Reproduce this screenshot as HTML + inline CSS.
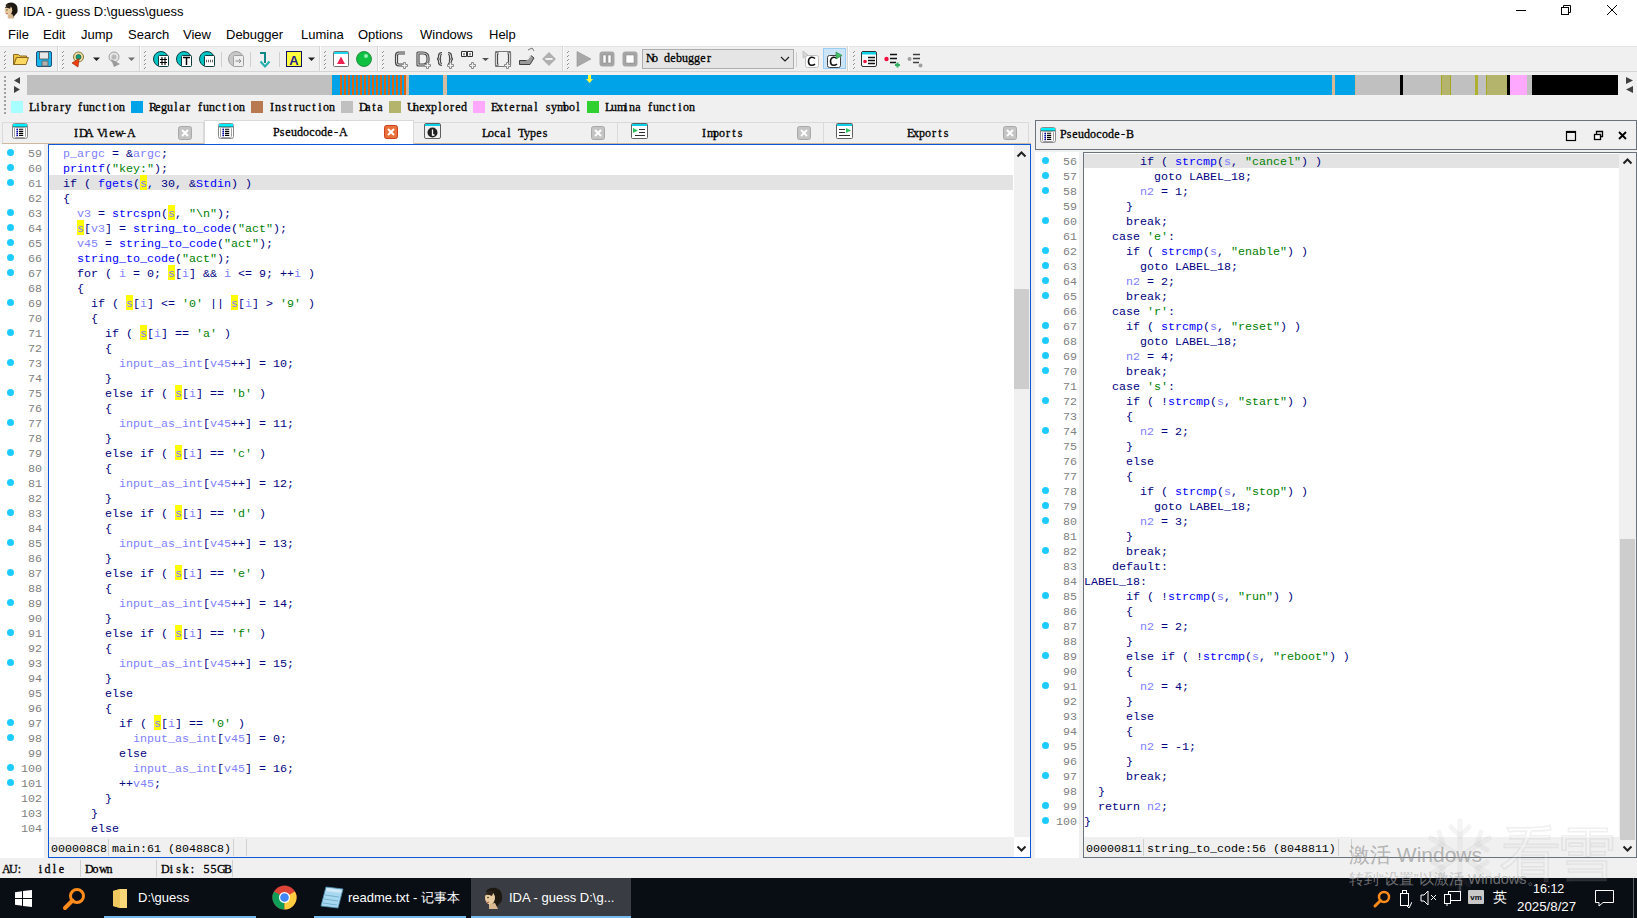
<!DOCTYPE html>
<html><head><meta charset="utf-8"><title>IDA</title><style>
*{margin:0;padding:0;box-sizing:border-box}
html,body{width:1637px;height:918px;overflow:hidden}
body{position:relative;background:#f0f0f0;font-family:"Liberation Sans",sans-serif;color:#000}
.abs,div,b,span,svg{position:absolute}
i{font-style:normal}
.titlebar{left:0;top:0;width:1637px;height:46px;background:#fff}
.title{left:23px;top:3px;font-size:13px;line-height:18px;color:#000;white-space:nowrap}
.menu{top:26px;font-size:13px;line-height:17px;white-space:nowrap}
.toolbar{left:0;top:46px;width:1637px;height:26px;background:#f0f0f0;border-top:1px solid #e3e3e3;border-bottom:1px solid #d5d5d5}
.grip{width:3px;border-left:2px dotted #a0a0a0}
.sep{width:1px;background:#d0d0d0}
.navbar{top:75px;height:20px}
.legbox{top:101px;width:12px;height:12px}
.legtxt{top:99px;font-family:"Liberation Serif",serif;font-size:12px;line-height:16px;-webkit-text-stroke:0.3px #000;white-space:nowrap}
.tab{top:122px;height:21px;background:#f0f0f0;border:1px solid #dadada;border-bottom:none}
.tabtxt{font-family:"Liberation Serif",serif;font-size:12px;-webkit-text-stroke:0.3px #000;line-height:14px;white-space:nowrap}
.code{font-family:"Liberation Mono",monospace;font-size:11.67px}
.ln{width:40px;text-align:right;font-family:"Liberation Mono",monospace;font-size:11.67px;line-height:15px;padding-top:2px;color:#808080;white-space:pre}
.cl{font-family:"Liberation Mono",monospace;font-size:11.67px;line-height:15px;padding-top:2px;color:#000080;white-space:pre}
.dot{width:7px;height:7px;border-radius:50%;background:#1ecbff}
.v{color:#8080ff}
.f{color:#0000ff}
.s{color:#008000}
.h{color:#8080ff}
.status{font-family:"Liberation Serif",serif;font-size:12px;-webkit-text-stroke:0.3px #000;line-height:14px;white-space:nowrap}
.taskbar{left:0;top:878px;width:1637px;height:40px;background:#090d14}
.tbtxt{color:#fff;font-size:13px;line-height:18px;white-space:nowrap}
u{text-decoration:none;display:inline-block;width:6px;text-align:center}
.sm{font-family:"Liberation Serif",serif;font-weight:bold;font-size:12px;white-space:nowrap}
.status u{width:7px}

</style></head><body>
<div class="titlebar"></div>
<!-- app icon -->
<svg style="left:1px;top:2px" width="18" height="18" viewBox="0 0 24 24"><path d="M6 4 Q10 0 16 1 Q22 3 22 9 Q23 14 19 17 L16 21 L12 15 Z" fill="#1e1812"/><ellipse cx="10" cy="11" rx="5" ry="6.5" fill="#e6caa0"/><path d="M5 8 Q8 3 14 4 L12 9 Q8 7 5 8 Z" fill="#2a2018"/><circle cx="8" cy="10.5" r="0.8" fill="#302010"/><path d="M6.5 15 Q8 16 9 15" stroke="#b04030" stroke-width="1" fill="none"/><path d="M9 17 L15 16 L18 22 H9 Z" fill="#d8b890"/></svg>
<div class="title">IDA - guess D:\guess\guess</div>
<svg style="left:1515px;top:5px" width="104" height="11" viewBox="0 0 104 11"><line x1="1" y1="5.5" x2="11" y2="5.5" stroke="#000" stroke-width="1"/><rect x="46.5" y="2.5" width="7" height="7" fill="none" stroke="#000"/><path d="M48.5 2.5 V0.5 H55.5 V7.5 H53.5" fill="none" stroke="#000"/><path d="M92 0 L102 10 M102 0 L92 10" stroke="#000" stroke-width="1"/></svg>
<div class="menu" style="left:8px">File</div>
<div class="menu" style="left:43px">Edit</div>
<div class="menu" style="left:81px">Jump</div>
<div class="menu" style="left:128px">Search</div>
<div class="menu" style="left:183px">View</div>
<div class="menu" style="left:226px">Debugger</div>
<div class="menu" style="left:301px">Lumina</div>
<div class="menu" style="left:358px">Options</div>
<div class="menu" style="left:420px">Windows</div>
<div class="menu" style="left:489px">Help</div>

<div class="toolbar"></div>
<svg style="left:0;top:46px" width="940" height="26" viewBox="0 0 940 26">
<defs>
<pattern id="grp" width="3" height="3" patternUnits="userSpaceOnUse"><rect x="1" y="0" width="1" height="1" fill="#8c8c8c"/><rect x="0" y="1" width="1" height="1" fill="#b5b5b5"/></pattern>
</defs>
<!-- grips --><rect x="5" y="5" width="1" height="1" fill="#9a9a9a"/><rect x="4" y="6" width="1" height="1" fill="#8a8a8a"/><rect x="5" y="7" width="1" height="1" fill="#fafafa"/><rect x="5" y="9" width="1" height="1" fill="#9a9a9a"/><rect x="4" y="10" width="1" height="1" fill="#8a8a8a"/><rect x="5" y="11" width="1" height="1" fill="#fafafa"/><rect x="5" y="13" width="1" height="1" fill="#9a9a9a"/><rect x="4" y="14" width="1" height="1" fill="#8a8a8a"/><rect x="5" y="15" width="1" height="1" fill="#fafafa"/><rect x="5" y="17" width="1" height="1" fill="#9a9a9a"/><rect x="4" y="18" width="1" height="1" fill="#8a8a8a"/><rect x="5" y="19" width="1" height="1" fill="#fafafa"/><rect x="5" y="21" width="1" height="1" fill="#9a9a9a"/><rect x="4" y="22" width="1" height="1" fill="#8a8a8a"/><rect x="5" y="23" width="1" height="1" fill="#fafafa"/><rect x="63" y="5" width="1" height="1" fill="#9a9a9a"/><rect x="62" y="6" width="1" height="1" fill="#8a8a8a"/><rect x="63" y="7" width="1" height="1" fill="#fafafa"/><rect x="63" y="9" width="1" height="1" fill="#9a9a9a"/><rect x="62" y="10" width="1" height="1" fill="#8a8a8a"/><rect x="63" y="11" width="1" height="1" fill="#fafafa"/><rect x="63" y="13" width="1" height="1" fill="#9a9a9a"/><rect x="62" y="14" width="1" height="1" fill="#8a8a8a"/><rect x="63" y="15" width="1" height="1" fill="#fafafa"/><rect x="63" y="17" width="1" height="1" fill="#9a9a9a"/><rect x="62" y="18" width="1" height="1" fill="#8a8a8a"/><rect x="63" y="19" width="1" height="1" fill="#fafafa"/><rect x="63" y="21" width="1" height="1" fill="#9a9a9a"/><rect x="62" y="22" width="1" height="1" fill="#8a8a8a"/><rect x="63" y="23" width="1" height="1" fill="#fafafa"/><rect x="145" y="5" width="1" height="1" fill="#9a9a9a"/><rect x="144" y="6" width="1" height="1" fill="#8a8a8a"/><rect x="145" y="7" width="1" height="1" fill="#fafafa"/><rect x="145" y="9" width="1" height="1" fill="#9a9a9a"/><rect x="144" y="10" width="1" height="1" fill="#8a8a8a"/><rect x="145" y="11" width="1" height="1" fill="#fafafa"/><rect x="145" y="13" width="1" height="1" fill="#9a9a9a"/><rect x="144" y="14" width="1" height="1" fill="#8a8a8a"/><rect x="145" y="15" width="1" height="1" fill="#fafafa"/><rect x="145" y="17" width="1" height="1" fill="#9a9a9a"/><rect x="144" y="18" width="1" height="1" fill="#8a8a8a"/><rect x="145" y="19" width="1" height="1" fill="#fafafa"/><rect x="145" y="21" width="1" height="1" fill="#9a9a9a"/><rect x="144" y="22" width="1" height="1" fill="#8a8a8a"/><rect x="145" y="23" width="1" height="1" fill="#fafafa"/><rect x="325" y="5" width="1" height="1" fill="#9a9a9a"/><rect x="324" y="6" width="1" height="1" fill="#8a8a8a"/><rect x="325" y="7" width="1" height="1" fill="#fafafa"/><rect x="325" y="9" width="1" height="1" fill="#9a9a9a"/><rect x="324" y="10" width="1" height="1" fill="#8a8a8a"/><rect x="325" y="11" width="1" height="1" fill="#fafafa"/><rect x="325" y="13" width="1" height="1" fill="#9a9a9a"/><rect x="324" y="14" width="1" height="1" fill="#8a8a8a"/><rect x="325" y="15" width="1" height="1" fill="#fafafa"/><rect x="325" y="17" width="1" height="1" fill="#9a9a9a"/><rect x="324" y="18" width="1" height="1" fill="#8a8a8a"/><rect x="325" y="19" width="1" height="1" fill="#fafafa"/><rect x="325" y="21" width="1" height="1" fill="#9a9a9a"/><rect x="324" y="22" width="1" height="1" fill="#8a8a8a"/><rect x="325" y="23" width="1" height="1" fill="#fafafa"/><rect x="383" y="5" width="1" height="1" fill="#9a9a9a"/><rect x="382" y="6" width="1" height="1" fill="#8a8a8a"/><rect x="383" y="7" width="1" height="1" fill="#fafafa"/><rect x="383" y="9" width="1" height="1" fill="#9a9a9a"/><rect x="382" y="10" width="1" height="1" fill="#8a8a8a"/><rect x="383" y="11" width="1" height="1" fill="#fafafa"/><rect x="383" y="13" width="1" height="1" fill="#9a9a9a"/><rect x="382" y="14" width="1" height="1" fill="#8a8a8a"/><rect x="383" y="15" width="1" height="1" fill="#fafafa"/><rect x="383" y="17" width="1" height="1" fill="#9a9a9a"/><rect x="382" y="18" width="1" height="1" fill="#8a8a8a"/><rect x="383" y="19" width="1" height="1" fill="#fafafa"/><rect x="383" y="21" width="1" height="1" fill="#9a9a9a"/><rect x="382" y="22" width="1" height="1" fill="#8a8a8a"/><rect x="383" y="23" width="1" height="1" fill="#fafafa"/><rect x="568" y="5" width="1" height="1" fill="#9a9a9a"/><rect x="567" y="6" width="1" height="1" fill="#8a8a8a"/><rect x="568" y="7" width="1" height="1" fill="#fafafa"/><rect x="568" y="9" width="1" height="1" fill="#9a9a9a"/><rect x="567" y="10" width="1" height="1" fill="#8a8a8a"/><rect x="568" y="11" width="1" height="1" fill="#fafafa"/><rect x="568" y="13" width="1" height="1" fill="#9a9a9a"/><rect x="567" y="14" width="1" height="1" fill="#8a8a8a"/><rect x="568" y="15" width="1" height="1" fill="#fafafa"/><rect x="568" y="17" width="1" height="1" fill="#9a9a9a"/><rect x="567" y="18" width="1" height="1" fill="#8a8a8a"/><rect x="568" y="19" width="1" height="1" fill="#fafafa"/><rect x="568" y="21" width="1" height="1" fill="#9a9a9a"/><rect x="567" y="22" width="1" height="1" fill="#8a8a8a"/><rect x="568" y="23" width="1" height="1" fill="#fafafa"/><rect x="854" y="5" width="1" height="1" fill="#9a9a9a"/><rect x="853" y="6" width="1" height="1" fill="#8a8a8a"/><rect x="854" y="7" width="1" height="1" fill="#fafafa"/><rect x="854" y="9" width="1" height="1" fill="#9a9a9a"/><rect x="853" y="10" width="1" height="1" fill="#8a8a8a"/><rect x="854" y="11" width="1" height="1" fill="#fafafa"/><rect x="854" y="13" width="1" height="1" fill="#9a9a9a"/><rect x="853" y="14" width="1" height="1" fill="#8a8a8a"/><rect x="854" y="15" width="1" height="1" fill="#fafafa"/><rect x="854" y="17" width="1" height="1" fill="#9a9a9a"/><rect x="853" y="18" width="1" height="1" fill="#8a8a8a"/><rect x="854" y="19" width="1" height="1" fill="#fafafa"/><rect x="854" y="21" width="1" height="1" fill="#9a9a9a"/><rect x="853" y="22" width="1" height="1" fill="#8a8a8a"/><rect x="854" y="23" width="1" height="1" fill="#fafafa"/>
<!-- full separators -->
<g fill="#d5d5d5"><rect x="57" y="0" width="1" height="25"/><rect x="139" y="0" width="1" height="25"/><rect x="319" y="0" width="1" height="25"/><rect x="377" y="0" width="1" height="25"/><rect x="562" y="0" width="1" height="25"/><rect x="847" y="0" width="1" height="25"/></g>
<g fill="#fdfdfd"><rect x="58" y="0" width="1" height="25"/><rect x="140" y="0" width="1" height="25"/><rect x="320" y="0" width="1" height="25"/><rect x="378" y="0" width="1" height="25"/><rect x="563" y="0" width="1" height="25"/><rect x="848" y="0" width="1" height="25"/></g>
<!-- short separators -->
<g fill="#cfcfcf"><rect x="221" y="6" width="1" height="15"/><rect x="250" y="6" width="1" height="15"/><rect x="279" y="6" width="1" height="15"/><rect x="796" y="6" width="1" height="15"/></g>
<!-- folder -->
<path d="M13.5 8.5 H18.5 L20 10 H26.5 V11.5 H16.5 L14 18.5 H13.5 Z" fill="#f0c040" stroke="#8a6a20"/>
<path d="M14 18.5 L16.5 11.5 H28.5 L26 18.5 Z" fill="#fbd860" stroke="#8a6a20"/>
<!-- floppy -->
<rect x="36.5" y="5.5" width="15" height="15" rx="1.5" fill="#19b6ee" stroke="#20507a"/>
<rect x="39.5" y="6" width="9" height="7" fill="#e8e8e8" stroke="#505050" stroke-width="0.8"/>
<rect x="42" y="15" width="6" height="5" fill="#b0b0b0" stroke="#606060" stroke-width="0.8"/>
<!-- icon red+green -->
<circle cx="78.5" cy="11" r="5" fill="#f0e0a0" stroke="#807040"/>
<circle cx="78.5" cy="11" r="2.5" fill="#10a080" stroke="#205040" stroke-width="0.7"/>
<path d="M72 17 L79 12.5 L78 21 Z" fill="#f04010" stroke="#902000" stroke-width="0.6"/>
<path d="M93 11.5 H100 L96.5 15 Z" fill="#202020"/>
<!-- gray hand -->
<circle cx="114" cy="11" r="5" fill="#e6e6e6" stroke="#a0a0a0"/>
<circle cx="114" cy="11" r="2.5" fill="#b8b8b8"/>
<path d="M111 13 L120 18 L114 21 Z" fill="#9a9a9a"/>
<path d="M128 11.5 H135 L131.5 15 Z" fill="#707070"/>
<!-- teal circles -->
<g>
<circle cx="161" cy="13" r="7.5" fill="#00c4c4" stroke="#0c3c3c"/>
<rect x="158.5" y="9.5" width="10" height="11" rx="1" fill="#fff" stroke="#0c3c3c"/>
<path d="M162 11 V19 M165 11 V19 M160 13.5 H167 M160 16.5 H167" stroke="#000" stroke-width="1.1"/>
<circle cx="184" cy="13" r="7.5" fill="#00c4c4" stroke="#0c3c3c"/>
<rect x="181.5" y="9.5" width="10" height="11" rx="1" fill="#fff" stroke="#0c3c3c"/>
<path d="M183 11.5 H190 M186.5 11.5 V19" stroke="#000" stroke-width="1.5"/>
<circle cx="207" cy="13" r="7.5" fill="#00c4c4" stroke="#0c3c3c"/>
<rect x="204.5" y="9.5" width="10" height="11" rx="1" fill="#fff" stroke="#0c3c3c"/>
<path d="M206 15 H213" stroke="#606060" stroke-width="2.5" stroke-dasharray="1,1"/>
</g>
<!-- gray circle -->
<circle cx="236" cy="13" r="7.5" fill="#c8c8c8" stroke="#a0a0a0"/>
<rect x="233.5" y="9.5" width="10" height="11" rx="1" fill="#eeeeee" stroke="#a0a0a0"/>
<path d="M235.5 15 H241 M239 13 L241 15 L239 17" fill="none" stroke="#8a8a8a"/>
<!-- teal arrow -->
<path d="M260 7 H265 V17" fill="none" stroke="#108888" stroke-width="2"/>
<path d="M260.5 15.5 L265 20.5 L269.5 15.5" fill="none" stroke="#20b0b0" stroke-width="2"/>
<!-- A box -->
<rect x="286.5" y="5.5" width="15" height="15" fill="#ffff40" stroke="#101060"/>
<text x="294" y="18.5" font-family="Liberation Sans" font-weight="bold" font-size="13" fill="#202090" text-anchor="middle">A</text>
<path d="M308 11.5 H315 L311.5 15 Z" fill="#202020"/>
<!-- red triangle window -->
<rect x="333.5" y="5.5" width="15" height="15" rx="1" fill="#fff" stroke="#707070"/>
<rect x="334" y="6" width="14" height="2" fill="#20d8f0"/>
<path d="M337 18 L341 10.5 L345 18 Z" fill="#f02050"/>
<!-- green sphere -->
<circle cx="364" cy="13" r="7.5" fill="#10c040" stroke="#108030" stroke-width="0.8"/>
<circle cx="366" cy="10" r="2" fill="#90f0b0"/>
<!-- C D {} grid [] pen diamond -->
<g fill="none" stroke-linejoin="round">
<g stroke="#4a4a4a" stroke-width="3.2">
<path d="M405 7 H399 Q396.5 7 396.5 9.5 V16.5 Q396.5 19 399 19 H404"/>
<path d="M418 7 H423 Q428 7 428 12 V14 Q428 19 423 19 H418 Z"/>
<path d="M442 7.5 Q439.5 7.5 439.5 10 V12 L438.5 13 L439.5 14 V16 Q439.5 18.5 442 18.5 M448 7.5 Q450.5 7.5 450.5 10 V12 L451.5 13 L450.5 14 V16 Q450.5 18.5 448 18.5"/>
<path d="M498.5 7 H496.5 V19 H498.5 M507.5 7 H509.5 V19 H507.5"/>
</g>
<g stroke="#d8d8d8" stroke-width="1">
<path d="M405 7 H399 Q396.5 7 396.5 9.5 V16.5 Q396.5 19 399 19 H404"/>
<path d="M418 7 H423 Q428 7 428 12 V14 Q428 19 423 19 H418 Z"/>
<path d="M442 7.5 Q439.5 7.5 439.5 10 V12 L438.5 13 L439.5 14 V16 Q439.5 18.5 442 18.5 M448 7.5 Q450.5 7.5 450.5 10 V12 L451.5 13 L450.5 14 V16 Q450.5 18.5 448 18.5"/>
<path d="M498.5 7 H496.5 V19 H498.5 M507.5 7 H509.5 V19 H507.5"/>
</g>
<rect x="495.5" y="5.5" width="15" height="15" stroke="#7a7a7a" stroke-width="1"/>
<rect x="461.5" y="5.5" width="5" height="5" stroke="#303030"/><rect x="467.5" y="5.5" width="5" height="5" stroke="#303030"/>
<rect x="462" y="6" width="4" height="4" fill="#fff" stroke="none"/><rect x="468" y="6" width="4" height="4" fill="#fff" stroke="none"/>
<path d="M464 7 V9.5 M470 7 V9.5" stroke="#303030"/>
</g>
<g fill="#f0f0f0" stroke="#8a8a8a" stroke-width="1"><path d="M403.5 16.5 h2 v2 h2 v2 h-2 v2 h-2 v-2 h-2 v-2 h2 Z"/><path d="M426.5 16.5 h2 v2 h2 v2 h-2 v2 h-2 v-2 h-2 v-2 h2 Z"/><path d="M449.5 16.5 h2 v2 h2 v2 h-2 v2 h-2 v-2 h-2 v-2 h2 Z"/><path d="M471.5 16.5 h2 v2 h2 v2 h-2 v2 h-2 v-2 h-2 v-2 h2 Z"/><path d="M506.5 16.5 h2 v2 h2 v2 h-2 v2 h-2 v-2 h-2 v-2 h2 Z"/></g>
<path d="M482 12 H489 L485.5 15 Z" fill="#505050"/>
<path d="M519.5 14.5 H527 L531 9.5 L534 12 L530 18.5 H519.5 Z" fill="#9a9a9a" stroke="#404040" stroke-width="1"/>
<path d="M527 14.5 L531 9.5" stroke="#fff" stroke-width="1"/>
<path d="M528 4 L532 2 L534 5" fill="none" stroke="#707070" stroke-width="1"/>
<path d="M542 13 L549 6 L556 13 L549 20 Z" fill="#b0b0b0"/>
<rect x="545.5" y="12" width="7" height="2" fill="#f0f0f0"/>
<!-- play pause stop -->
<path d="M577 5.5 L591 13 L577 20.5 Z" fill="#a8a8a8" stroke="#909090" stroke-width="0.6"/>
<rect x="599.5" y="5.5" width="15" height="15" rx="3" fill="#a6a6a6"/>
<rect x="603" y="9" width="3" height="8" fill="#fff" stroke="#808080" stroke-width="0.5"/><rect x="608" y="9" width="3" height="8" fill="#fff" stroke="#808080" stroke-width="0.5"/>
<rect x="622.5" y="5.5" width="15" height="15" rx="3" fill="#a6a6a6"/>
<rect x="626" y="9" width="8" height="8" fill="#fff" stroke="#808080" stroke-width="0.5"/>
<!-- combo -->
<rect x="642.5" y="3.5" width="151" height="19" fill="#e5e5e5" stroke="#adadad"/>
<path d="M781 11 L785 15 L789 11" fill="none" stroke="#202020" stroke-width="1.2"/>
<!-- C icons -->
<rect x="805.5" y="9.5" width="13" height="12" rx="2" fill="#fff" stroke="#c0c0c0"/>
<path d="M803 5 L808 9 L803 12 Z" fill="#d8d8d8" stroke="#b0b0b0" stroke-width="0.6"/>
<path d="M815 12.5 Q813.5 11 811.5 11.2 Q808.5 11.8 808.5 15.5 Q808.5 19 811.5 19.3 Q813.5 19.5 815 18" fill="none" stroke="#101010" stroke-width="1.6"/>
<rect x="823.5" y="2.5" width="22" height="20" fill="#cce4f7" stroke="#99ccf5"/>
<rect x="827.5" y="9.5" width="13" height="12" rx="2" fill="#fff" stroke="#404040"/>
<path d="M837 12.5 Q835.5 11 833.5 11.2 Q830.5 11.8 830.5 15.5 Q830.5 19 833.5 19.3 Q835.5 19.5 837 18" fill="none" stroke="#101010" stroke-width="1.6"/>
<path d="M836 6 L842 9.5 L836 13 Z" fill="#40c060" stroke="#208040" stroke-width="0.6"/>
<!-- list icons -->
<rect x="861.5" y="5.5" width="15" height="15" rx="1.5" fill="#fff" stroke="#303030"/>
<rect x="862" y="6" width="14" height="2.5" fill="#10d0e8"/>
<circle cx="865" cy="15.5" r="1.8" fill="#f01040"/>
<path d="M868 11.5 H875 M868 14.5 H875 M868 17.5 H875" stroke="#101010" stroke-width="1.5"/>
<circle cx="886.5" cy="13" r="2.2" fill="#f01040"/>
<path d="M890 8.5 H897 M890 12.5 H897 M890 16.5 H896" stroke="#101010" stroke-width="1.5"/>
<path d="M897.5 16.5 V21.5 M895 19 H900" stroke="#30b060" stroke-width="2"/>
<circle cx="909.5" cy="13" r="2" fill="#a0a0a0"/>
<path d="M913 8.5 H920 M913 12.5 H920 M913 16.5 H919" stroke="#404040" stroke-width="1.5"/>
<circle cx="920.5" cy="19.5" r="2" fill="#a0a0a0"/>
</svg>
<div style="left:646px;top:51px;font-family:'Liberation Serif',serif;-webkit-text-stroke:0.3px #000;font-size:12px;line-height:14px;white-space:nowrap"><u>N</u><u>o</u><u>&nbsp;</u><u>d</u><u>e</u><u>b</u><u>u</u><u>g</u><u>g</u><u>e</u><u>r</u></div>


<!-- nav band -->
<div class="grip" style="left:4px;top:76px;height:38px"></div>
<svg style="left:12px;top:76px" width="10" height="18" viewBox="0 0 10 18"><path d="M8 1 L2 4.5 L8 8 Z" fill="#404040"/><path d="M2 10 L8 13.5 L2 17 Z" fill="#404040"/></svg>
<svg style="left:27px;top:75px" width="1592" height="20" viewBox="27 0 1592 20" shape-rendering="crispEdges">
<defs>
<pattern id="stripes" x="338" y="0" width="4" height="20" patternUnits="userSpaceOnUse"><rect x="0" y="0" width="2" height="20" fill="#00a2e8"/><rect x="2" y="0" width="2" height="20" fill="#e0620a"/></pattern>
</defs>
<rect x="27" y="0" width="305" height="20" fill="#c0c0c0"/>
<rect x="331" y="0" width="1" height="20" fill="#d8b890"/>
<rect x="332" y="0" width="6" height="20" fill="#00a2e8"/>
<rect x="338" y="0" width="68" height="20" fill="url(#stripes)"/>
<rect x="406" y="0" width="3" height="20" fill="#c8b8a8"/>
<rect x="409" y="0" width="34" height="20" fill="#00a2e8"/>
<rect x="443" y="0" width="4" height="20" fill="#d4bca0"/>
<rect x="447" y="0" width="885" height="20" fill="#00a2e8"/>
<rect x="1332" y="0" width="3" height="20" fill="#d8b890"/>
<rect x="1335" y="0" width="20" height="20" fill="#00a2e8"/>
<rect x="1355" y="0" width="1" height="20" fill="#d8b890"/>
<rect x="1356" y="0" width="44" height="20" fill="#c0c0c0"/>
<rect x="1400" y="0" width="3" height="20" fill="#000"/>
<rect x="1403" y="0" width="38" height="20" fill="#c0c0c0"/>
<rect x="1441" y="0" width="10" height="20" fill="#b4b46c"/>
<rect x="1441" y="0" width="1" height="20" fill="#a8a820"/><rect x="1450" y="0" width="1" height="20" fill="#a8a820"/>
<rect x="1451" y="0" width="24" height="20" fill="#c0c0c0"/>
<rect x="1475" y="0" width="3" height="20" fill="#b0b030"/>
<rect x="1478" y="0" width="8" height="20" fill="#c0c0c0"/>
<rect x="1486" y="0" width="21" height="20" fill="#b4b46c"/>
<rect x="1486" y="0" width="1" height="20" fill="#a8a820"/>
<rect x="1507" y="0" width="3" height="20" fill="#000"/>
<rect x="1510" y="0" width="17" height="20" fill="#ffa8ff"/>
<rect x="1527" y="0" width="5" height="20" fill="#c0c0c0"/>
<rect x="1532" y="0" width="86" height="20" fill="#000"/>
</svg>
<!-- yellow arrow marker -->
<svg style="left:586px;top:75px" width="7" height="9" viewBox="0 0 7 9"><rect x="2" y="0" width="3" height="5" fill="#ffff40"/><path d="M0 4 H7 L3.5 8 Z" fill="#ffff40"/></svg>
<!-- legend -->
<div class="legbox" style="left:11px;background:#a8ffff"></div><div class="legtxt" style="left:29px"><u>L</u><u>i</u><u>b</u><u>r</u><u>a</u><u>r</u><u>y</u><u>&nbsp;</u><u>f</u><u>u</u><u>n</u><u>c</u><u>t</u><u>i</u><u>o</u><u>n</u></div>
<div class="legbox" style="left:131px;background:#00a2e8"></div><div class="legtxt" style="left:149px"><u>R</u><u>e</u><u>g</u><u>u</u><u>l</u><u>a</u><u>r</u><u>&nbsp;</u><u>f</u><u>u</u><u>n</u><u>c</u><u>t</u><u>i</u><u>o</u><u>n</u></div>
<div class="legbox" style="left:251px;background:#b87850"></div><div class="legtxt" style="left:269px"><u>I</u><u>n</u><u>s</u><u>t</u><u>r</u><u>u</u><u>c</u><u>t</u><u>i</u><u>o</u><u>n</u></div>
<div class="legbox" style="left:341px;background:#c0c0c0"></div><div class="legtxt" style="left:359px"><u>D</u><u>a</u><u>t</u><u>a</u></div>
<div class="legbox" style="left:389px;background:#b4b46c"></div><div class="legtxt" style="left:407px"><u>U</u><u>n</u><u>e</u><u>x</u><u>p</u><u>l</u><u>o</u><u>r</u><u>e</u><u>d</u></div>
<div class="legbox" style="left:473px;background:#ffa8ff"></div><div class="legtxt" style="left:491px"><u>E</u><u>x</u><u>t</u><u>e</u><u>r</u><u>n</u><u>a</u><u>l</u><u>&nbsp;</u><u>s</u><u>y</u><u>m</u><u>b</u><u>o</u><u>l</u></div>
<div class="legbox" style="left:587px;background:#30d030"></div><div class="legtxt" style="left:605px"><u>L</u><u>u</u><u>m</u><u>i</u><u>n</u><u>a</u><u>&nbsp;</u><u>f</u><u>u</u><u>n</u><u>c</u><u>t</u><u>i</u><u>o</u><u>n</u></div>

<svg style="left:1624px;top:76px" width="10" height="18" viewBox="0 0 10 18"><path d="M2 1 L9 4.5 L2 8 Z" fill="#404040"/><path d="M9 10 L2 13.5 L9 17 Z" fill="#404040"/></svg>

<!--LEGEND-->

<div style="left:0;top:142px;width:1031px;height:2px;background:#f0f0f0"></div>
<div style="left:2px;top:143px;width:1029px;height:1px;background:#cdb9a0"></div>
<div class="tab" style="left:2px;width:202px"></div>
<div class="tab" style="left:414px;width:204px;border-left:none"></div>
<div class="tab" style="left:618px;width:206px;border-left:none"></div>
<div class="tab" style="left:824px;width:205px;border-left:none"></div>
<div class="tab" style="left:204px;top:120px;width:210px;height:25px;background:#fff;border-color:#d9d9d9"></div>
<!-- tab icons -->
<svg style="left:12px;top:123px" width="16" height="16" viewBox="0 0 16 16"><rect x="0.5" y="0.5" width="15" height="15" rx="2" fill="#fff" stroke="#8a8a8a"/><rect x="1" y="1" width="14" height="3" fill="#00f0ff"/><rect x="1" y="3.5" width="14" height="0.8" fill="#205050"/><rect x="2.5" y="4.5" width="11" height="10" rx="1" fill="#fff" stroke="#a0a0a0" stroke-width="1"/><g fill="#0000a0"><circle cx="5.2" cy="6.3" r="0.9"/><circle cx="5.2" cy="8.4" r="0.9"/><circle cx="5.2" cy="10.4" r="0.9"/><circle cx="5.2" cy="12.4" r="0.9"/></g><path d="M7 6.3 H11.2 M7 8.4 H11.2 M7 10.4 H11.2 M7 12.4 H11.2" stroke="#000" stroke-width="1.1"/></svg>
<svg style="left:218px;top:123px" width="16" height="16" viewBox="0 0 16 16"><rect x="0.5" y="0.5" width="15" height="15" rx="2" fill="#fff" stroke="#8a8a8a"/><rect x="1" y="1" width="14" height="3" fill="#00f0ff"/><rect x="1" y="3.5" width="14" height="0.8" fill="#205050"/><rect x="2.5" y="4.5" width="11" height="10" rx="1" fill="#fff" stroke="#a0a0a0" stroke-width="1"/><g fill="#0000a0"><circle cx="5.2" cy="6.3" r="0.9"/><circle cx="5.2" cy="8.4" r="0.9"/><circle cx="5.2" cy="10.4" r="0.9"/><circle cx="5.2" cy="12.4" r="0.9"/></g><path d="M7 6.3 H11.2 M7 8.4 H11.2 M7 10.4 H11.2 M7 12.4 H11.2" stroke="#000" stroke-width="1.1"/></svg>
<svg style="left:424px;top:123px" width="17" height="16" viewBox="0 0 17 16"><rect x="0.5" y="0.5" width="16" height="15" rx="1.5" fill="#f0f0f0" stroke="#606060"/><rect x="1" y="1" width="15" height="2" fill="#10d0e8"/><circle cx="8.5" cy="9.5" r="5" fill="#202020"/><path d="M8.5 6.5 V12 H10.5" fill="none" stroke="#fff" stroke-width="1.3"/></svg>
<svg style="left:631px;top:123px" width="17" height="16" viewBox="0 0 17 16"><rect x="0.5" y="0.5" width="16" height="15" rx="1" fill="#fff" stroke="#606060"/><rect x="1" y="1" width="15" height="2" fill="#10d0e8"/><path d="M2 5 L7 7.5 L2 10 Z" fill="#30c060"/><path d="M8 6.5 H14 M8 9.5 H14 M4 12.5 H14" stroke="#303030" stroke-width="1"/></svg>
<svg style="left:836px;top:123px" width="17" height="16" viewBox="0 0 17 16"><rect x="0.5" y="0.5" width="16" height="15" rx="1" fill="#fff" stroke="#606060"/><rect x="1" y="1" width="15" height="2" fill="#10d0e8"/><path d="M10 5 L15 7.5 L10 10 Z" fill="#30c060"/><path d="M3 6.5 H9 M3 9.5 H9 M3 12.5 H14" stroke="#303030" stroke-width="1"/></svg>
<div class="tabtxt" style="left:73px;top:126px"><u>I</u><u>D</u><u>A</u><u>&nbsp;</u><u>V</u><u>i</u><u>e</u><u>w</u><u>-</u><u>A</u></div>
<div class="tabtxt" style="left:273px;top:125px"><u>P</u><u>s</u><u>e</u><u>u</u><u>d</u><u>o</u><u>c</u><u>o</u><u>d</u><u>e</u><u>-</u><u>A</u></div>
<div class="tabtxt" style="left:482px;top:126px"><u>L</u><u>o</u><u>c</u><u>a</u><u>l</u><u>&nbsp;</u><u>T</u><u>y</u><u>p</u><u>e</u><u>s</u></div>
<div class="tabtxt" style="left:701px;top:126px"><u>I</u><u>m</u><u>p</u><u>o</u><u>r</u><u>t</u><u>s</u></div>
<div class="tabtxt" style="left:907px;top:126px"><u>E</u><u>x</u><u>p</u><u>o</u><u>r</u><u>t</u><u>s</u></div>
<svg style="left:178px;top:126px" width="14" height="14" viewBox="0 0 14 14"><rect x="0.5" y="0.5" width="13" height="13" rx="2" fill="#c4c4c4" stroke="#a8a8a8"/><path d="M4 4 L10 10 M10 4 L4 10" stroke="#fff" stroke-width="2"/></svg>
<svg style="left:384px;top:125px" width="14" height="14" viewBox="0 0 14 14"><rect x="0.5" y="0.5" width="13" height="13" rx="2" fill="#e8703a" stroke="#d04020"/><path d="M4 4 L10 10 M10 4 L4 10" stroke="#fff" stroke-width="2"/></svg>
<svg style="left:591px;top:126px" width="14" height="14" viewBox="0 0 14 14"><rect x="0.5" y="0.5" width="13" height="13" rx="2" fill="#c4c4c4" stroke="#a8a8a8"/><path d="M4 4 L10 10 M10 4 L4 10" stroke="#fff" stroke-width="2"/></svg>
<svg style="left:797px;top:126px" width="14" height="14" viewBox="0 0 14 14"><rect x="0.5" y="0.5" width="13" height="13" rx="2" fill="#c4c4c4" stroke="#a8a8a8"/><path d="M4 4 L10 10 M10 4 L4 10" stroke="#fff" stroke-width="2"/></svg>
<svg style="left:1003px;top:126px" width="14" height="14" viewBox="0 0 14 14"><rect x="0.5" y="0.5" width="13" height="13" rx="2" fill="#c4c4c4" stroke="#a8a8a8"/><path d="M4 4 L10 10 M10 4 L4 10" stroke="#fff" stroke-width="2"/></svg>


<!-- left panel -->
<div style="left:0;top:144px;width:44px;height:714px;background:#fff"></div>
<div style="left:44px;top:144px;width:4px;height:714px;background:#f0f0f0"></div>
<div style="left:48px;top:144px;width:983px;height:714px;border:1px solid #0a5ad8;background:#fff"></div>
<div style="left:49px;top:175px;width:964px;height:15px;background:#e3e3e3"></div>
<b style="left:140px;top:175px;width:7px;height:15px;background:#ffff00"></b><b style="left:168px;top:205px;width:7px;height:15px;background:#ffff00"></b><b style="left:77px;top:220px;width:7px;height:15px;background:#ffff00"></b><b style="left:168px;top:265px;width:7px;height:15px;background:#ffff00"></b><b style="left:126px;top:295px;width:7px;height:15px;background:#ffff00"></b><b style="left:231px;top:295px;width:7px;height:15px;background:#ffff00"></b><b style="left:140px;top:325px;width:7px;height:15px;background:#ffff00"></b><b style="left:175px;top:385px;width:7px;height:15px;background:#ffff00"></b><b style="left:175px;top:445px;width:7px;height:15px;background:#ffff00"></b><b style="left:175px;top:505px;width:7px;height:15px;background:#ffff00"></b><b style="left:175px;top:565px;width:7px;height:15px;background:#ffff00"></b><b style="left:175px;top:625px;width:7px;height:15px;background:#ffff00"></b><b style="left:154px;top:715px;width:7px;height:15px;background:#ffff00"></b><b class="dot" style="left:7px;top:149px"></b><div class="ln" style="left:2px;top:145px">59</div><div class="cl" style="left:63px;top:145px"><i class="v">p_argc</i> = &amp;<i class="v">argc</i>;</div><b class="dot" style="left:7px;top:164px"></b><div class="ln" style="left:2px;top:160px">60</div><div class="cl" style="left:63px;top:160px"><i class="f">printf</i>(<i class="s">&quot;key:&quot;</i>);</div><b class="dot" style="left:7px;top:179px"></b><div class="ln" style="left:2px;top:175px">61</div><div class="cl" style="left:63px;top:175px">if ( <i class="f">fgets</i>(<i class="h">s</i>, 30, &amp;<i class="f">Stdin</i>) )</div><div class="ln" style="left:2px;top:190px">62</div><div class="cl" style="left:63px;top:190px">{</div><b class="dot" style="left:7px;top:209px"></b><div class="ln" style="left:2px;top:205px">63</div><div class="cl" style="left:63px;top:205px">  <i class="v">v3</i> = <i class="f">strcspn</i>(<i class="h">s</i>, <i class="s">&quot;\n&quot;</i>);</div><b class="dot" style="left:7px;top:224px"></b><div class="ln" style="left:2px;top:220px">64</div><div class="cl" style="left:63px;top:220px">  <i class="h">s</i>[<i class="v">v3</i>] = <i class="f">string_to_code</i>(<i class="s">&quot;act&quot;</i>);</div><b class="dot" style="left:7px;top:239px"></b><div class="ln" style="left:2px;top:235px">65</div><div class="cl" style="left:63px;top:235px">  <i class="v">v45</i> = <i class="f">string_to_code</i>(<i class="s">&quot;act&quot;</i>);</div><b class="dot" style="left:7px;top:254px"></b><div class="ln" style="left:2px;top:250px">66</div><div class="cl" style="left:63px;top:250px">  <i class="f">string_to_code</i>(<i class="s">&quot;act&quot;</i>);</div><b class="dot" style="left:7px;top:269px"></b><div class="ln" style="left:2px;top:265px">67</div><div class="cl" style="left:63px;top:265px">  for ( <i class="v">i</i> = 0; <i class="h">s</i>[<i class="v">i</i>] &amp;&amp; <i class="v">i</i> &lt;= 9; ++<i class="v">i</i> )</div><div class="ln" style="left:2px;top:280px">68</div><div class="cl" style="left:63px;top:280px">  {</div><b class="dot" style="left:7px;top:299px"></b><div class="ln" style="left:2px;top:295px">69</div><div class="cl" style="left:63px;top:295px">    if ( <i class="h">s</i>[<i class="v">i</i>] &lt;= <i class="s">&#x27;0&#x27;</i> || <i class="h">s</i>[<i class="v">i</i>] &gt; <i class="s">&#x27;9&#x27;</i> )</div><div class="ln" style="left:2px;top:310px">70</div><div class="cl" style="left:63px;top:310px">    {</div><b class="dot" style="left:7px;top:329px"></b><div class="ln" style="left:2px;top:325px">71</div><div class="cl" style="left:63px;top:325px">      if ( <i class="h">s</i>[<i class="v">i</i>] == <i class="s">&#x27;a&#x27;</i> )</div><div class="ln" style="left:2px;top:340px">72</div><div class="cl" style="left:63px;top:340px">      {</div><b class="dot" style="left:7px;top:359px"></b><div class="ln" style="left:2px;top:355px">73</div><div class="cl" style="left:63px;top:355px">        <i class="v">input_as_int</i>[<i class="v">v45</i>++] = 10;</div><div class="ln" style="left:2px;top:370px">74</div><div class="cl" style="left:63px;top:370px">      }</div><b class="dot" style="left:7px;top:389px"></b><div class="ln" style="left:2px;top:385px">75</div><div class="cl" style="left:63px;top:385px">      else if ( <i class="h">s</i>[<i class="v">i</i>] == <i class="s">&#x27;b&#x27;</i> )</div><div class="ln" style="left:2px;top:400px">76</div><div class="cl" style="left:63px;top:400px">      {</div><b class="dot" style="left:7px;top:419px"></b><div class="ln" style="left:2px;top:415px">77</div><div class="cl" style="left:63px;top:415px">        <i class="v">input_as_int</i>[<i class="v">v45</i>++] = 11;</div><div class="ln" style="left:2px;top:430px">78</div><div class="cl" style="left:63px;top:430px">      }</div><b class="dot" style="left:7px;top:449px"></b><div class="ln" style="left:2px;top:445px">79</div><div class="cl" style="left:63px;top:445px">      else if ( <i class="h">s</i>[<i class="v">i</i>] == <i class="s">&#x27;c&#x27;</i> )</div><div class="ln" style="left:2px;top:460px">80</div><div class="cl" style="left:63px;top:460px">      {</div><b class="dot" style="left:7px;top:479px"></b><div class="ln" style="left:2px;top:475px">81</div><div class="cl" style="left:63px;top:475px">        <i class="v">input_as_int</i>[<i class="v">v45</i>++] = 12;</div><div class="ln" style="left:2px;top:490px">82</div><div class="cl" style="left:63px;top:490px">      }</div><b class="dot" style="left:7px;top:509px"></b><div class="ln" style="left:2px;top:505px">83</div><div class="cl" style="left:63px;top:505px">      else if ( <i class="h">s</i>[<i class="v">i</i>] == <i class="s">&#x27;d&#x27;</i> )</div><div class="ln" style="left:2px;top:520px">84</div><div class="cl" style="left:63px;top:520px">      {</div><b class="dot" style="left:7px;top:539px"></b><div class="ln" style="left:2px;top:535px">85</div><div class="cl" style="left:63px;top:535px">        <i class="v">input_as_int</i>[<i class="v">v45</i>++] = 13;</div><div class="ln" style="left:2px;top:550px">86</div><div class="cl" style="left:63px;top:550px">      }</div><b class="dot" style="left:7px;top:569px"></b><div class="ln" style="left:2px;top:565px">87</div><div class="cl" style="left:63px;top:565px">      else if ( <i class="h">s</i>[<i class="v">i</i>] == <i class="s">&#x27;e&#x27;</i> )</div><div class="ln" style="left:2px;top:580px">88</div><div class="cl" style="left:63px;top:580px">      {</div><b class="dot" style="left:7px;top:599px"></b><div class="ln" style="left:2px;top:595px">89</div><div class="cl" style="left:63px;top:595px">        <i class="v">input_as_int</i>[<i class="v">v45</i>++] = 14;</div><div class="ln" style="left:2px;top:610px">90</div><div class="cl" style="left:63px;top:610px">      }</div><b class="dot" style="left:7px;top:629px"></b><div class="ln" style="left:2px;top:625px">91</div><div class="cl" style="left:63px;top:625px">      else if ( <i class="h">s</i>[<i class="v">i</i>] == <i class="s">&#x27;f&#x27;</i> )</div><div class="ln" style="left:2px;top:640px">92</div><div class="cl" style="left:63px;top:640px">      {</div><b class="dot" style="left:7px;top:659px"></b><div class="ln" style="left:2px;top:655px">93</div><div class="cl" style="left:63px;top:655px">        <i class="v">input_as_int</i>[<i class="v">v45</i>++] = 15;</div><div class="ln" style="left:2px;top:670px">94</div><div class="cl" style="left:63px;top:670px">      }</div><div class="ln" style="left:2px;top:685px">95</div><div class="cl" style="left:63px;top:685px">      else</div><div class="ln" style="left:2px;top:700px">96</div><div class="cl" style="left:63px;top:700px">      {</div><b class="dot" style="left:7px;top:719px"></b><div class="ln" style="left:2px;top:715px">97</div><div class="cl" style="left:63px;top:715px">        if ( <i class="h">s</i>[<i class="v">i</i>] == <i class="s">&#x27;0&#x27;</i> )</div><b class="dot" style="left:7px;top:734px"></b><div class="ln" style="left:2px;top:730px">98</div><div class="cl" style="left:63px;top:730px">          <i class="v">input_as_int</i>[<i class="v">v45</i>] = 0;</div><div class="ln" style="left:2px;top:745px">99</div><div class="cl" style="left:63px;top:745px">        else</div><b class="dot" style="left:7px;top:764px"></b><div class="ln" style="left:2px;top:760px">100</div><div class="cl" style="left:63px;top:760px">          <i class="v">input_as_int</i>[<i class="v">v45</i>] = 16;</div><b class="dot" style="left:7px;top:779px"></b><div class="ln" style="left:2px;top:775px">101</div><div class="cl" style="left:63px;top:775px">        ++<i class="v">v45</i>;</div><div class="ln" style="left:2px;top:790px">102</div><div class="cl" style="left:63px;top:790px">      }</div><div class="ln" style="left:2px;top:805px">103</div><div class="cl" style="left:63px;top:805px">    }</div><div class="ln" style="left:2px;top:820px">104</div><div class="cl" style="left:63px;top:820px">    else</div>
<div style="left:1014px;top:145px;width:16px;height:692px;background:#f0f0f0"></div>
<div style="left:1014px;top:289px;width:15px;height:100px;background:#cdcdcd"></div>
<svg style="left:1016px;top:150px" width="11" height="8" viewBox="0 0 11 8"><path d="M1.5 6.5 L5.5 2.5 L9.5 6.5" fill="none" stroke="#202020" stroke-width="2"/></svg>
<svg style="left:1016px;top:845px" width="11" height="8" viewBox="0 0 11 8"><path d="M1.5 1.5 L5.5 5.5 L9.5 1.5" fill="none" stroke="#202020" stroke-width="2"/></svg>
<div style="left:49px;top:837px;width:965px;height:20px;background:#f0f0f0"></div>
<div class="cl" style="left:51px;top:840px;color:#000">000008C8</div>
<div style="left:108px;top:839px;width:1px;height:17px;background:#d0d0d0"></div>
<div class="cl" style="left:112px;top:840px;color:#000">main:61 (80488C8)</div>
<div style="left:233px;top:839px;width:1px;height:17px;background:#d0d0d0"></div>
<div style="left:246px;top:839px;width:1px;height:17px;background:#d0d0d0"></div>

<!-- right panel -->
<div style="left:1035px;top:120px;width:602px;height:30px;border:1px solid #6b737c;background:#f0f0f0"></div>
<!-- pseudo B icon -->
<svg style="left:1040px;top:127px" width="16" height="16" viewBox="0 0 16 16"><rect x="0.5" y="0.5" width="15" height="15" rx="2" fill="#fff" stroke="#8a8a8a"/><rect x="1" y="1" width="14" height="3" fill="#00f0ff"/><rect x="1" y="3.5" width="14" height="0.8" fill="#205050"/><rect x="2.5" y="4.5" width="11" height="10" rx="1" fill="#fff" stroke="#a0a0a0" stroke-width="1"/><g fill="#0000a0"><circle cx="5.2" cy="6.3" r="0.9"/><circle cx="5.2" cy="8.4" r="0.9"/><circle cx="5.2" cy="10.4" r="0.9"/><circle cx="5.2" cy="12.4" r="0.9"/></g><path d="M7 6.3 H11.2 M7 8.4 H11.2 M7 10.4 H11.2 M7 12.4 H11.2" stroke="#000" stroke-width="1.1"/></svg>
<div class="tabtxt" style="left:1060px;top:127px"><u>P</u><u>s</u><u>e</u><u>u</u><u>d</u><u>o</u><u>c</u><u>o</u><u>d</u><u>e</u><u>-</u><u>B</u></div>
<svg style="left:1565px;top:130px" width="64" height="12" viewBox="0 0 64 12"><rect x="1.5" y="1.5" width="9" height="9" fill="none" stroke="#000" stroke-width="1.2"/><rect x="1" y="1" width="10" height="2" fill="#000"/><rect x="29.5" y="4.5" width="6" height="5" fill="#fff" stroke="#000" stroke-width="1.3"/><path d="M31.5 4.5 V1.5 H37.5 V6.5 H35.5" fill="none" stroke="#000" stroke-width="1.3"/><path d="M54 2 L61 9 M61 2 L54 9" stroke="#000" stroke-width="1.8"/></svg>
<div style="left:1035px;top:152px;width:44px;height:706px;background:#fff"></div>
<div style="left:1079px;top:152px;width:4px;height:706px;background:#f0f0f0"></div>
<div style="left:1083px;top:152px;width:554px;height:706px;border:1px solid #6b737c;background:#fff"></div>
<div style="left:1084px;top:154px;width:535px;height:14px;background:#e3e3e3"></div>
<b class="dot" style="left:1042px;top:157px"></b><div class="ln" style="left:1037px;top:153px">56</div><div class="cl" style="left:1084px;top:153px">        if ( <i class="f">strcmp</i>(<i class="v">s</i>, <i class="s">&quot;cancel&quot;</i>) )</div><b class="dot" style="left:1042px;top:172px"></b><div class="ln" style="left:1037px;top:168px">57</div><div class="cl" style="left:1084px;top:168px">          goto LABEL_18;</div><b class="dot" style="left:1042px;top:187px"></b><div class="ln" style="left:1037px;top:183px">58</div><div class="cl" style="left:1084px;top:183px">        <i class="v">n2</i> = 1;</div><div class="ln" style="left:1037px;top:198px">59</div><div class="cl" style="left:1084px;top:198px">      }</div><b class="dot" style="left:1042px;top:217px"></b><div class="ln" style="left:1037px;top:213px">60</div><div class="cl" style="left:1084px;top:213px">      break;</div><div class="ln" style="left:1037px;top:228px">61</div><div class="cl" style="left:1084px;top:228px">    case <i class="s">&#x27;e&#x27;</i>:</div><b class="dot" style="left:1042px;top:247px"></b><div class="ln" style="left:1037px;top:243px">62</div><div class="cl" style="left:1084px;top:243px">      if ( <i class="f">strcmp</i>(<i class="v">s</i>, <i class="s">&quot;enable&quot;</i>) )</div><b class="dot" style="left:1042px;top:262px"></b><div class="ln" style="left:1037px;top:258px">63</div><div class="cl" style="left:1084px;top:258px">        goto LABEL_18;</div><b class="dot" style="left:1042px;top:277px"></b><div class="ln" style="left:1037px;top:273px">64</div><div class="cl" style="left:1084px;top:273px">      <i class="v">n2</i> = 2;</div><b class="dot" style="left:1042px;top:292px"></b><div class="ln" style="left:1037px;top:288px">65</div><div class="cl" style="left:1084px;top:288px">      break;</div><div class="ln" style="left:1037px;top:303px">66</div><div class="cl" style="left:1084px;top:303px">    case <i class="s">&#x27;r&#x27;</i>:</div><b class="dot" style="left:1042px;top:322px"></b><div class="ln" style="left:1037px;top:318px">67</div><div class="cl" style="left:1084px;top:318px">      if ( <i class="f">strcmp</i>(<i class="v">s</i>, <i class="s">&quot;reset&quot;</i>) )</div><b class="dot" style="left:1042px;top:337px"></b><div class="ln" style="left:1037px;top:333px">68</div><div class="cl" style="left:1084px;top:333px">        goto LABEL_18;</div><b class="dot" style="left:1042px;top:352px"></b><div class="ln" style="left:1037px;top:348px">69</div><div class="cl" style="left:1084px;top:348px">      <i class="v">n2</i> = 4;</div><b class="dot" style="left:1042px;top:367px"></b><div class="ln" style="left:1037px;top:363px">70</div><div class="cl" style="left:1084px;top:363px">      break;</div><div class="ln" style="left:1037px;top:378px">71</div><div class="cl" style="left:1084px;top:378px">    case <i class="s">&#x27;s&#x27;</i>:</div><b class="dot" style="left:1042px;top:397px"></b><div class="ln" style="left:1037px;top:393px">72</div><div class="cl" style="left:1084px;top:393px">      if ( !<i class="f">strcmp</i>(<i class="v">s</i>, <i class="s">&quot;start&quot;</i>) )</div><div class="ln" style="left:1037px;top:408px">73</div><div class="cl" style="left:1084px;top:408px">      {</div><b class="dot" style="left:1042px;top:427px"></b><div class="ln" style="left:1037px;top:423px">74</div><div class="cl" style="left:1084px;top:423px">        <i class="v">n2</i> = 2;</div><div class="ln" style="left:1037px;top:438px">75</div><div class="cl" style="left:1084px;top:438px">      }</div><div class="ln" style="left:1037px;top:453px">76</div><div class="cl" style="left:1084px;top:453px">      else</div><div class="ln" style="left:1037px;top:468px">77</div><div class="cl" style="left:1084px;top:468px">      {</div><b class="dot" style="left:1042px;top:487px"></b><div class="ln" style="left:1037px;top:483px">78</div><div class="cl" style="left:1084px;top:483px">        if ( <i class="f">strcmp</i>(<i class="v">s</i>, <i class="s">&quot;stop&quot;</i>) )</div><b class="dot" style="left:1042px;top:502px"></b><div class="ln" style="left:1037px;top:498px">79</div><div class="cl" style="left:1084px;top:498px">          goto LABEL_18;</div><b class="dot" style="left:1042px;top:517px"></b><div class="ln" style="left:1037px;top:513px">80</div><div class="cl" style="left:1084px;top:513px">        <i class="v">n2</i> = 3;</div><div class="ln" style="left:1037px;top:528px">81</div><div class="cl" style="left:1084px;top:528px">      }</div><b class="dot" style="left:1042px;top:547px"></b><div class="ln" style="left:1037px;top:543px">82</div><div class="cl" style="left:1084px;top:543px">      break;</div><div class="ln" style="left:1037px;top:558px">83</div><div class="cl" style="left:1084px;top:558px">    default:</div><div class="ln" style="left:1037px;top:573px">84</div><div class="cl" style="left:1084px;top:573px">LABEL_18:</div><b class="dot" style="left:1042px;top:592px"></b><div class="ln" style="left:1037px;top:588px">85</div><div class="cl" style="left:1084px;top:588px">      if ( !<i class="f">strcmp</i>(<i class="v">s</i>, <i class="s">&quot;run&quot;</i>) )</div><div class="ln" style="left:1037px;top:603px">86</div><div class="cl" style="left:1084px;top:603px">      {</div><b class="dot" style="left:1042px;top:622px"></b><div class="ln" style="left:1037px;top:618px">87</div><div class="cl" style="left:1084px;top:618px">        <i class="v">n2</i> = 2;</div><div class="ln" style="left:1037px;top:633px">88</div><div class="cl" style="left:1084px;top:633px">      }</div><b class="dot" style="left:1042px;top:652px"></b><div class="ln" style="left:1037px;top:648px">89</div><div class="cl" style="left:1084px;top:648px">      else if ( !<i class="f">strcmp</i>(<i class="v">s</i>, <i class="s">&quot;reboot&quot;</i>) )</div><div class="ln" style="left:1037px;top:663px">90</div><div class="cl" style="left:1084px;top:663px">      {</div><b class="dot" style="left:1042px;top:682px"></b><div class="ln" style="left:1037px;top:678px">91</div><div class="cl" style="left:1084px;top:678px">        <i class="v">n2</i> = 4;</div><div class="ln" style="left:1037px;top:693px">92</div><div class="cl" style="left:1084px;top:693px">      }</div><div class="ln" style="left:1037px;top:708px">93</div><div class="cl" style="left:1084px;top:708px">      else</div><div class="ln" style="left:1037px;top:723px">94</div><div class="cl" style="left:1084px;top:723px">      {</div><b class="dot" style="left:1042px;top:742px"></b><div class="ln" style="left:1037px;top:738px">95</div><div class="cl" style="left:1084px;top:738px">        <i class="v">n2</i> = -1;</div><div class="ln" style="left:1037px;top:753px">96</div><div class="cl" style="left:1084px;top:753px">      }</div><b class="dot" style="left:1042px;top:772px"></b><div class="ln" style="left:1037px;top:768px">97</div><div class="cl" style="left:1084px;top:768px">      break;</div><div class="ln" style="left:1037px;top:783px">98</div><div class="cl" style="left:1084px;top:783px">  }</div><b class="dot" style="left:1042px;top:802px"></b><div class="ln" style="left:1037px;top:798px">99</div><div class="cl" style="left:1084px;top:798px">  return <i class="v">n2</i>;</div><b class="dot" style="left:1042px;top:817px"></b><div class="ln" style="left:1037px;top:813px">100</div><div class="cl" style="left:1084px;top:813px">}</div>
<div style="left:1619px;top:153px;width:17px;height:704px;background:#f0f0f0"></div>
<div style="left:1620px;top:539px;width:15px;height:301px;background:#cdcdcd"></div>
<svg style="left:1622px;top:157px" width="11" height="8" viewBox="0 0 11 8"><path d="M1.5 6.5 L5.5 2.5 L9.5 6.5" fill="none" stroke="#202020" stroke-width="2"/></svg>
<svg style="left:1622px;top:845px" width="11" height="8" viewBox="0 0 11 8"><path d="M1.5 1.5 L5.5 5.5 L9.5 1.5" fill="none" stroke="#202020" stroke-width="2"/></svg>
<div style="left:1084px;top:837px;width:535px;height:20px;background:#f0f0f0"></div>
<div class="cl" style="left:1086px;top:840px;color:#000">00000811</div>
<div style="left:1143px;top:839px;width:1px;height:17px;background:#d0d0d0"></div>
<div class="cl" style="left:1147px;top:840px;color:#000">string_to_code:56 (8048811)</div>
<div style="left:1338px;top:839px;width:1px;height:17px;background:#d0d0d0"></div>
<div style="left:1351px;top:839px;width:1px;height:17px;background:#d0d0d0"></div>

<!-- status bar -->
<div class="status" style="left:2px;top:862px"><u>A</u><u>U</u><u>:</u><u>&nbsp;</u><u>&nbsp;</u><u>i</u><u>d</u><u>l</u><u>e</u></div>
<div style="left:80px;top:860px;width:1px;height:17px;background:#d0d0d0"></div>
<div class="status" style="left:85px;top:862px"><u>D</u><u>o</u><u>w</u><u>n</u></div>
<div style="left:156px;top:860px;width:1px;height:17px;background:#d0d0d0"></div>
<div class="status" style="left:161px;top:862px"><u>D</u><u>i</u><u>s</u><u>k</u><u>:</u><u>&nbsp;</u><u>5</u><u>5</u><u>G</u><u>B</u></div>
<div style="left:232px;top:860px;width:1px;height:17px;background:#d0d0d0"></div>


<!-- taskbar -->
<div class="taskbar"></div>
<!-- windows logo -->
<svg style="left:15px;top:890px" width="17" height="17" viewBox="0 0 17 17"><path d="M0 2.3 L7 1.3 V8 H0 Z M8 1.1 L17 0 V8 H8 Z M0 9 H7 V15.7 L0 14.7 Z M8 9 H17 V17 L8 15.9 Z" fill="#fff"/></svg>
<!-- search -->
<svg style="left:62px;top:886px" width="26" height="26" viewBox="0 0 26 26"><circle cx="15" cy="10" r="6.5" fill="none" stroke="#ff8c1a" stroke-width="3"/><path d="M10.5 14.5 L3 22" stroke="#ff8c1a" stroke-width="4" stroke-linecap="round"/></svg>
<!-- folder -->
<svg style="left:112px;top:888px" width="16" height="21" viewBox="0 0 16 21"><path d="M1 3 L8 1 V20 L1 18 Z" fill="#e8c050"/><path d="M8 1 H15 V20 H8 Z" fill="#f8d878"/><path d="M1 3 L8 1 V20 L1 18 Z" fill="#f0c860"/></svg>
<div class="tbtxt" style="left:138px;top:889px">D:\guess</div>
<div style="left:104px;top:916px;width:152px;height:2px;background:#76b9ed"></div>
<!-- chrome -->
<svg style="left:272px;top:885px" width="25" height="25" viewBox="0 0 25 25"><circle cx="12.5" cy="12.5" r="12" fill="#db4437"/><path d="M12.5 12.5 L2.1 6.5 A12 12 0 0 0 12.5 24.5 Z" fill="#0f9d58"/><path d="M12.5 12.5 L12.5 24.5 A12 12 0 0 0 22.9 6.5 Z" fill="#ffcd40"/><circle cx="12.5" cy="12.5" r="5.5" fill="#fff"/><circle cx="12.5" cy="12.5" r="4.3" fill="#4285f4"/></svg>
<!-- notepad -->
<svg style="left:320px;top:886px" width="24" height="23" viewBox="0 0 24 23"><path d="M6 1 L23 3 L18 22 L1 20 Z" fill="#a8d8f0" stroke="#5090b0" stroke-width="0.8"/><path d="M7 2 L22 4 L21 7 L6 5 Z" fill="#d0e8f8"/><path d="M5 9 L19 11 M4 13 L18 15 M3 17 L17 19" stroke="#6aa8c8" stroke-width="0.8"/></svg>
<div class="tbtxt" style="left:348px;top:889px">readme.txt - 记事本</div>
<div style="left:314px;top:916px;width:152px;height:2px;background:#76b9ed"></div>
<!-- IDA active -->
<div style="left:471px;top:878px;width:160px;height:40px;background:#393c42"></div>
<svg style="left:480px;top:887px" width="24" height="24" viewBox="0 0 24 24"><path d="M6 4 Q10 0 16 1 Q22 3 22 9 Q23 14 19 17 L16 21 L12 15 Z" fill="#1e1812"/><ellipse cx="10" cy="11" rx="5" ry="6.5" fill="#e6caa0"/><path d="M5 8 Q8 3 14 4 L12 9 Q8 7 5 8 Z" fill="#2a2018"/><circle cx="8" cy="10.5" r="0.8" fill="#302010"/><path d="M6.5 15 Q8 16 9 15" stroke="#b04030" stroke-width="1" fill="none"/><path d="M9 17 L15 16 L18 22 H9 Z" fill="#d8b890"/></svg>
<div class="tbtxt" style="left:509px;top:889px">IDA - guess D:\g...</div>
<div style="left:471px;top:916px;width:160px;height:2px;background:#76b9ed"></div>
<!-- tray -->
<svg style="left:1372px;top:889px" width="20" height="20" viewBox="0 0 20 20"><circle cx="12" cy="8" r="5" fill="none" stroke="#ff8c1a" stroke-width="2.5"/><path d="M8.5 11.5 L3 17" stroke="#ff8c1a" stroke-width="3" stroke-linecap="round"/></svg>
<svg style="left:1398px;top:889px" width="14" height="20" viewBox="0 0 14 20"><rect x="2.5" y="4.5" width="8" height="12" fill="none" stroke="#fff"/><rect x="4.5" y="1.5" width="4" height="3" fill="none" stroke="#fff"/><path d="M8 16 L11 19 L14 13" fill="none" stroke="#fff"/></svg>
<svg style="left:1420px;top:890px" width="18" height="16" viewBox="0 0 18 16"><path d="M1 5 H4 L8 1 V15 L4 11 H1 Z" fill="none" stroke="#fff"/><path d="M11 5 L16 10 M16 5 L11 10" stroke="#fff"/></svg>
<svg style="left:1444px;top:890px" width="18" height="16" viewBox="0 0 18 16"><rect x="4.5" y="1.5" width="12" height="9" fill="none" stroke="#fff"/><rect x="0.5" y="4.5" width="6" height="9" fill="#0a0f17" stroke="#fff"/><path d="M3 14 V16" stroke="#fff"/></svg>
<svg style="left:1468px;top:890px" width="16" height="14" viewBox="0 0 16 14"><rect x="0" y="0" width="16" height="14" rx="1" fill="#c8c8c8"/><text x="8" y="10" font-family="Liberation Sans" font-size="8" font-weight="bold" fill="#0a0f17" text-anchor="middle">vm</text></svg>
<div class="tbtxt" style="left:1493px;top:888px;font-size:14px">英</div>
<div class="tbtxt" style="left:1533px;top:880px;font-size:12.5px">16:12</div>
<div class="tbtxt" style="left:1517px;top:898px;font-size:13.3px">2025/8/27</div>
<svg style="left:1595px;top:889px" width="19" height="19" viewBox="0 0 19 19"><path d="M0.5 1.5 H18.5 V13.5 H8 L4 17 V13.5 H0.5 Z" fill="none" stroke="#fff"/></svg>
<div style="left:1633px;top:878px;width:1px;height:40px;background:#5a5e64"></div>

<div style="left:1500px;top:820px;font-size:60px;line-height:70px;color:rgba(255,255,255,0.12);-webkit-text-stroke:1.6px rgba(120,120,120,0.11);white-space:nowrap;letter-spacing:-4px">看雪</div>
<svg style="left:1425px;top:818px" width="70" height="76" viewBox="0 0 70 76"><g stroke="rgba(130,130,130,0.09)" stroke-width="5" fill="none" stroke-linecap="round"><path d="M35 3 V73 M6 20 L64 56 M64 20 L6 56"/><path d="M26 9 L35 18 L44 9 M26 67 L35 58 L44 67 M8 32 L18 26 L14 14 M62 44 L52 50 L56 62 M62 32 L52 26 L56 14 M8 44 L18 50 L14 62"/></g><g stroke="rgba(255,255,255,0.16)" stroke-width="2" fill="none"><path d="M35 3 V73 M6 20 L64 56 M64 20 L6 56"/></g></svg>
<div style="left:1349px;top:843px;font-size:21px;line-height:24px;color:rgba(140,140,140,0.62);white-space:nowrap">激活 Windows</div>
<div style="left:1349px;top:870px;font-size:14.5px;line-height:18px;color:rgba(170,170,170,0.62);white-space:nowrap">转到“设置”以激活 Windows。</div>


</body></html>
